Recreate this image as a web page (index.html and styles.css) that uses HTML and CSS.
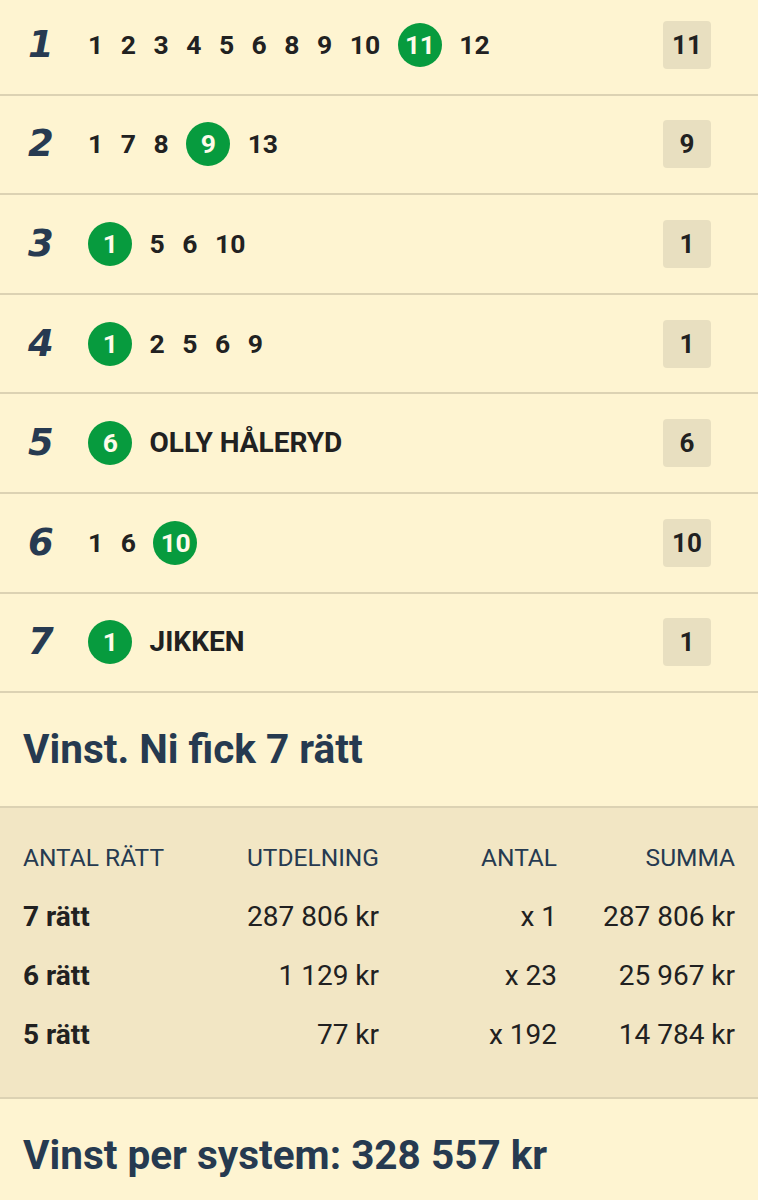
FILE: index.html
```html
<!DOCTYPE html>
<html lang="sv">
<head>
<meta charset="utf-8">
<title>Resultat</title>
<link rel="stylesheet" href="styles.css">
</head>
<body>
<div class="races">
  <div class="race">
    <div class="race-num">1</div>
    <div class="picks">
      <span class="pick">1</span><span class="pick">2</span><span class="pick">3</span><span class="pick">4</span><span class="pick">5</span><span class="pick">6</span><span class="pick">8</span><span class="pick">9</span><span class="pick">10</span><span class="pick win">11</span><span class="pick">12</span>
    </div>
    <div class="result">11</div>
  </div>
  <div class="race">
    <div class="race-num">2</div>
    <div class="picks">
      <span class="pick">1</span><span class="pick">7</span><span class="pick">8</span><span class="pick win">9</span><span class="pick">13</span>
    </div>
    <div class="result">9</div>
  </div>
  <div class="race">
    <div class="race-num">3</div>
    <div class="picks">
      <span class="pick win">1</span><span class="pick">5</span><span class="pick">6</span><span class="pick">10</span>
    </div>
    <div class="result">1</div>
  </div>
  <div class="race">
    <div class="race-num">4</div>
    <div class="picks">
      <span class="pick win">1</span><span class="pick">2</span><span class="pick">5</span><span class="pick">6</span><span class="pick">9</span>
    </div>
    <div class="result">1</div>
  </div>
  <div class="race">
    <div class="race-num">5</div>
    <div class="picks">
      <span class="pick win">6</span><span class="pick name">OLLY HÅLERYD</span>
    </div>
    <div class="result">6</div>
  </div>
  <div class="race">
    <div class="race-num">6</div>
    <div class="picks">
      <span class="pick">1</span><span class="pick">6</span><span class="pick win">10</span>
    </div>
    <div class="result">10</div>
  </div>
  <div class="race">
    <div class="race-num">7</div>
    <div class="picks">
      <span class="pick win">1</span><span class="pick name">JIKKEN</span>
    </div>
    <div class="result">1</div>
  </div>
</div>

<div class="summary">
  <h2 class="summary-title">Vinst. Ni fick 7 rätt</h2>
</div>

<div class="payout">
  <div class="payout-grid">
    <div class="th left">ANTAL RÄTT</div>
    <div class="th">UTDELNING</div>
    <div class="th">ANTAL</div>
    <div class="th">SUMMA</div>

    <div class="td left strong">7 rätt</div>
    <div class="td">287 806 kr</div>
    <div class="td">x 1</div>
    <div class="td">287 806 kr</div>

    <div class="td left strong">6 rätt</div>
    <div class="td">1 129 kr</div>
    <div class="td">x 23</div>
    <div class="td">25 967 kr</div>

    <div class="td left strong">5 rätt</div>
    <div class="td">77 kr</div>
    <div class="td">x 192</div>
    <div class="td">14 784 kr</div>
  </div>
</div>

<div class="total">
  <h2 class="total-title">Vinst per system: 328 557 kr</h2>
</div>
</body>
</html>
```

FILE: styles.css
```css
html, body {
  margin: 0;
  padding: 0;
}
body {
  background: #fef4d1;
  font-family: Roboto, "Liberation Sans", Arial, sans-serif;
  color: #212121;
  overflow: hidden;
}
.races {
  margin-top: -4px;
}
.race {
  display: flex;
  align-items: center;
  height: 97.6px;
  border-bottom: 2px solid #dcd2b3;
  padding: 0 47px 0 28px;
}
.race-num {
  width: 60px;
  flex: none;
  font-family: "DejaVu Sans", Roboto, sans-serif;
  font-weight: 700;
  font-style: italic;
  font-size: 37px;
  line-height: 48px;
  color: #273a51;
  letter-spacing: -1px;
}
.picks {
  display: flex;
  align-items: center;
  gap: 17.5px;
  flex: 1;
}
.pick {
  font-size: 26.5px;
  font-weight: 700;
  line-height: 44px;
  color: #212121;
}
.pick.win {
  width: 44px;
  height: 44px;
  border-radius: 50%;
  background: #079b3e;
  color: #fffbe9;
  text-align: center;
  letter-spacing: -0.5px;
}
.pick.name {
  font-size: 28px;
}
.result {
  width: 48px;
  height: 48px;
  flex: none;
  border-radius: 4px;
  background: #e8dfc0;
  font-size: 26px;
  font-weight: 700;
  line-height: 48px;
  text-align: center;
  color: #212121;
}
.summary {
  padding: 32px 23px 33px;
  border-bottom: 2px solid #dcd2b3;
}
.summary-title, .total-title {
  margin: 0;
  font-size: 40.5px;
  line-height: 48px;
  font-weight: 700;
  color: #263a50;
}
.payout {
  background: #f2e6c4;
  padding: 20px 23px 33px;
  border-bottom: 2px solid #dcd2b3;
}
.payout-grid {
  display: grid;
  grid-template-columns: repeat(4, 1fr);
}
.th {
  font-size: 24.5px;
  line-height: 59px;
  color: #263a50;
  text-align: right;
}
.td {
  font-size: 28px;
  line-height: 59px;
  color: #212121;
  text-align: right;
}
.left {
  text-align: left;
}
.strong {
  font-weight: 700;
}
.total {
  padding: 32px 23px;
}
```
